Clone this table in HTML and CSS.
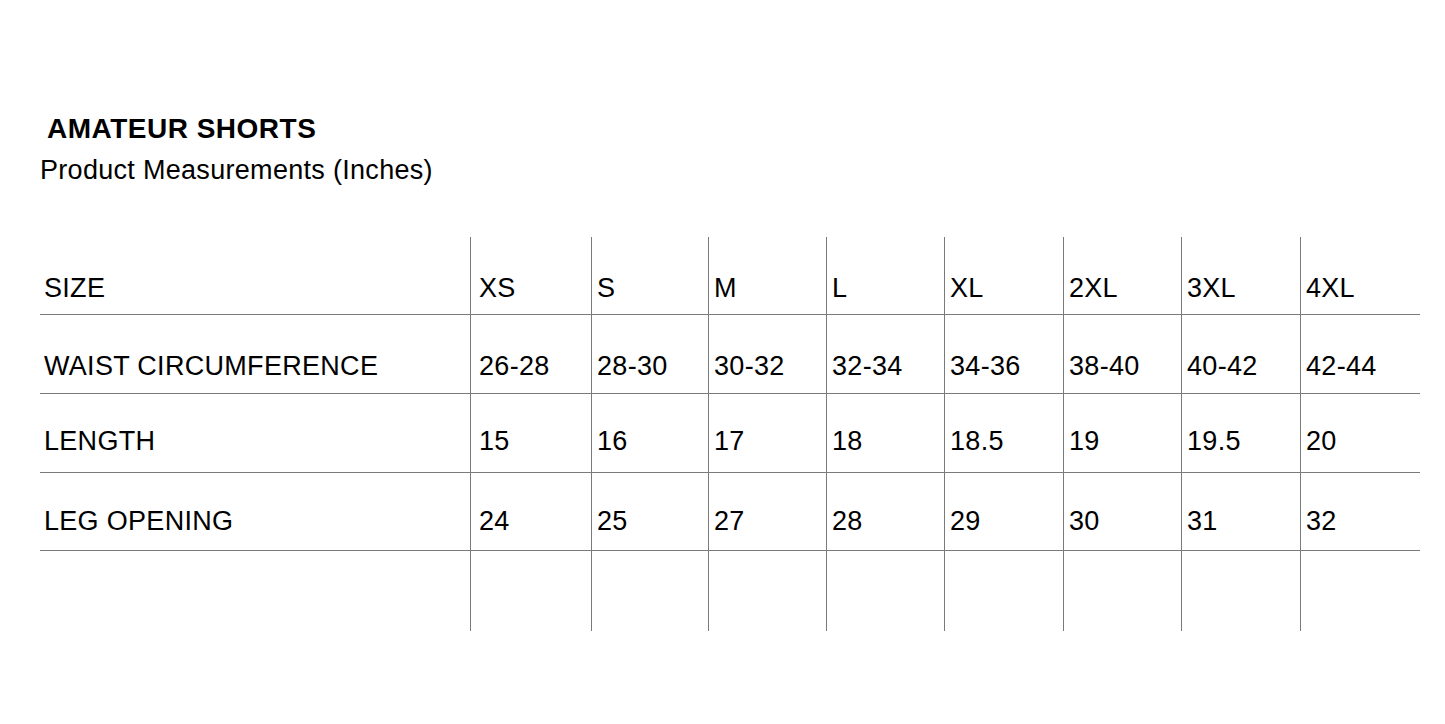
FILE: index.html
```html
<!DOCTYPE html>
<html>
<head>
<meta charset="utf-8">
<link rel="stylesheet" href="styles.css">
</head>
<body>
<div class="page">
  <h1 class="title">AMATEUR SHORTS</h1>
  <p class="subtitle">Product Measurements (Inches)</p>
  <div class="chart">
    <div class="row r1">
      <div class="cell label">SIZE</div>
      <div class="cell xs">XS</div>
      <div class="cell">S</div>
      <div class="cell">M</div>
      <div class="cell">L</div>
      <div class="cell">XL</div>
      <div class="cell">2XL</div>
      <div class="cell">3XL</div>
      <div class="cell">4XL</div>
    </div>
    <div class="row r2">
      <div class="cell label">WAIST CIRCUMFERENCE</div>
      <div class="cell xs">26-28</div>
      <div class="cell">28-30</div>
      <div class="cell">30-32</div>
      <div class="cell">32-34</div>
      <div class="cell">34-36</div>
      <div class="cell">38-40</div>
      <div class="cell">40-42</div>
      <div class="cell">42-44</div>
    </div>
    <div class="row r3">
      <div class="cell label">LENGTH</div>
      <div class="cell xs">15</div>
      <div class="cell">16</div>
      <div class="cell">17</div>
      <div class="cell">18</div>
      <div class="cell">18.5</div>
      <div class="cell">19</div>
      <div class="cell">19.5</div>
      <div class="cell">20</div>
    </div>
    <div class="row r4">
      <div class="cell label">LEG OPENING</div>
      <div class="cell xs">24</div>
      <div class="cell">25</div>
      <div class="cell">27</div>
      <div class="cell">28</div>
      <div class="cell">29</div>
      <div class="cell">30</div>
      <div class="cell">31</div>
      <div class="cell">32</div>
    </div>
    <div class="row r5">
      <div class="cell label"></div>
      <div class="cell xs"></div>
      <div class="cell"></div>
      <div class="cell"></div>
      <div class="cell"></div>
      <div class="cell"></div>
      <div class="cell"></div>
      <div class="cell"></div>
      <div class="cell"></div>
    </div>
  </div>
</div>
</body>
</html>
```

FILE: styles.css
```css
* { box-sizing: border-box; }

html, body {
  margin: 0;
  padding: 0;
  background: #ffffff;
}

body {
  font-family: "Liberation Sans", Arial, sans-serif;
  color: #000;
}

.page {
  padding: 113px 0 0 40px;
  width: 1445px;
}

.title {
  margin: 0 0 0 7px;
  font-size: 28px;
  line-height: 32px;
  font-weight: bold;
  letter-spacing: 0.5px;
}

.subtitle {
  margin: 9px 0 0 0;
  font-size: 27px;
  line-height: 32px;
  font-weight: normal;
  letter-spacing: 0.3px;
}

.chart {
  margin-top: 51px;
  width: 1380px;
}

.row {
  display: grid;
  grid-template-columns: 430px 121px 117px 118px 118px 119px 118px 119px 120px;
  border-bottom: 1px solid #7a7a7a;
}

.r1 { height: 78px; }
.r2 { height: 79px; }
.r3 { height: 79px; }
.r4 { height: 78px; }
.r5 { height: 80px; border-bottom: none; }

.cell {
  font-size: 27px;
  line-height: 32px;
  padding-left: 5px;
  border-left: 1px solid #7a7a7a;
  white-space: nowrap;
  letter-spacing: 0.3px;
}

.cell.label {
  border-left: none;
  padding-left: 4px;
}

.cell.xs { padding-left: 8px; }

.r1 .cell { padding-top: 35px; }
.r2 .cell { padding-top: 35px; }
.r3 .cell { padding-top: 31px; }
.r4 .cell { padding-top: 32px; }
```
